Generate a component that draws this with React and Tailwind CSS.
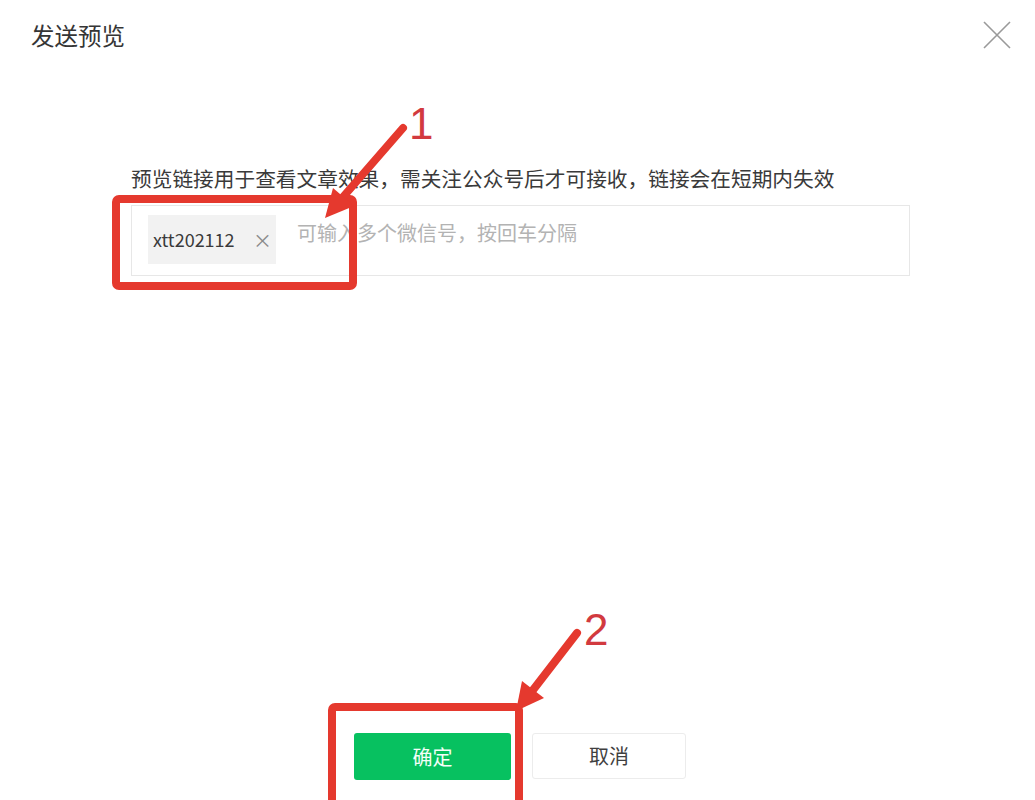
const FONT = { fontFamily: '"Noto Sans CJK SC", "Noto Sans", sans-serif' };

function CloseIcon() {
  return (
    <svg width="28" height="28" viewBox="0 0 28 28" className="text-[#9a9a9a]">
      <path d="M1 1 L27 27 M27 1 L1 27" stroke="currentColor" strokeWidth="1.6" fill="none" />
    </svg>
  );
}

function Annotations() {
  return (
    <svg
      className="absolute inset-0 pointer-events-none"
      width="1035"
      height="800"
      viewBox="0 0 1035 800"
    >
      {/* box 1 */}
      <rect x="116" y="199" width="237" height="87" rx="3" fill="none" stroke="#e5392e" strokeWidth="8" />
      <line x1="403" y1="128" x2="343" y2="197" stroke="#e5392e" strokeWidth="8" strokeLinecap="round" />
      <polygon points="325,218 354,206 333,188" fill="#e5392e" />
      <text x="409" y="139" fontSize="44" fill="#d23a3f" fontFamily="Liberation Sans, sans-serif">1</text>

      {/* box 2 */}
      <rect x="332" y="707" width="187" height="110" rx="3" fill="none" stroke="#e5392e" strokeWidth="8" />
      <line x1="577" y1="633" x2="533" y2="690" stroke="#e5392e" strokeWidth="8" strokeLinecap="round" />
      <polygon points="516,711 544,698 522,681" fill="#e5392e" />
      <text x="584" y="645" fontSize="44" fill="#d23a3f" fontFamily="Liberation Sans, sans-serif">2</text>
    </svg>
  );
}

export default function App() {
  return (
    <div className="relative w-[1035px] h-[800px] overflow-hidden bg-white" style={FONT}>
      <div className="flex items-center justify-between pt-5 pl-[31px] pr-[24px]">
        <h1 className="text-[23.5px] leading-[30px] text-[#353535]">发送预览</h1>
        <CloseIcon />
      </div>

      <div className="ml-[131px] w-[779px]">
        <p className="mt-[113px] text-[20.7px] leading-[30px] text-[#3a3a3a] whitespace-nowrap">
          预览链接用于查看文章效果，需关注公众号后才可接收，链接会在短期内失效
        </p>
        <div className="mt-3 h-[71px] border border-[#e7e7e7] flex items-start pl-4 pt-[9px]">
          <div className="h-[49px] w-[128px] bg-[#f2f2f2] flex items-center pl-[5px]">
            <span className="text-[18px] text-[#3a3a3a]">xtt202112</span>
            <span className="ml-auto mr-[4px] text-[19px] text-[#8a8a8a] leading-none">×</span>
          </div>
          <span className="ml-[21px] mt-[3px] text-[20px] leading-[30px] text-[#b3b3b3] whitespace-nowrap">
            可输入多个微信号，按回车分隔
          </span>
        </div>
      </div>

      <div className="mt-[457px] pl-[354px] flex gap-[21px]">
        <button className="w-[157px] h-[47px] rounded-[3px] bg-[#07c160] text-[#f4fff8] text-[20px]">
          确定
        </button>
        <button className="w-[154px] h-[46px] rounded-[3px] border border-[#ececec] bg-white text-[#3f3f3f] text-[20px]">
          取消
        </button>
      </div>

      <Annotations />
    </div>
  );
}
